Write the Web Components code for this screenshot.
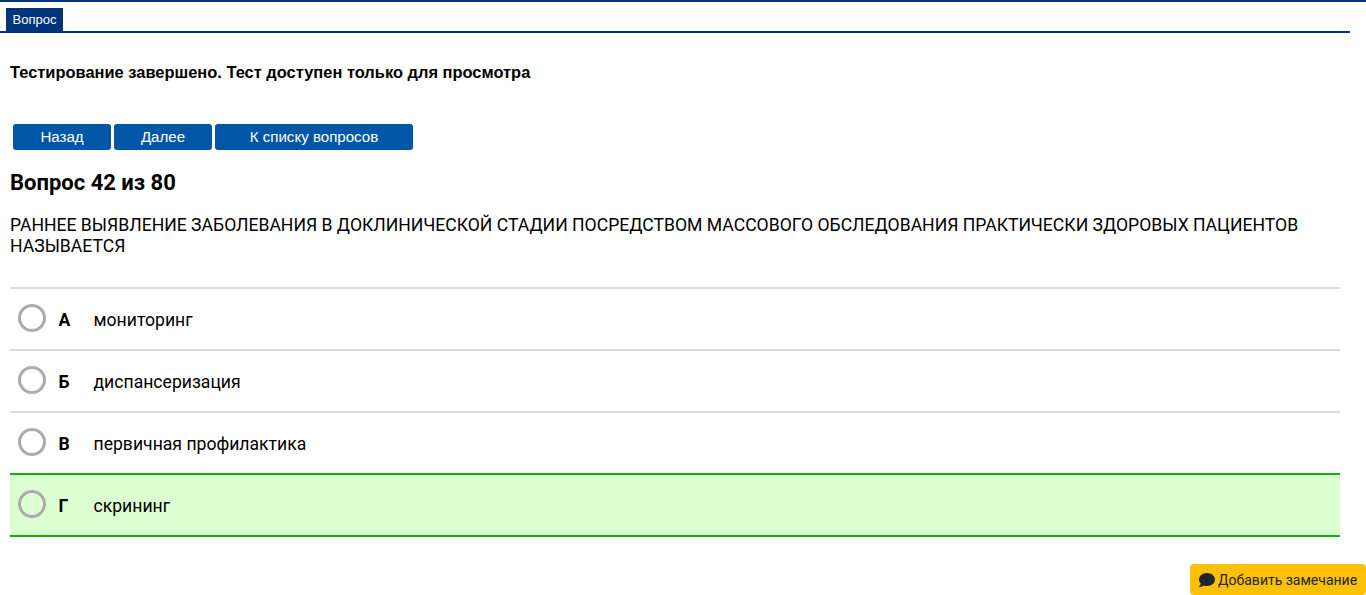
<!DOCTYPE html>
<html lang="ru">
<head>
<meta charset="utf-8">
<title>Вопрос</title>
<style>
html, body { margin: 0; padding: 0; background: #fff; height: 100%; overflow: hidden; }
body { font-family: Roboto, sans-serif; color: #000; }
</style>
</head>
<body>
<test-page>
  <tab-bar>Вопрос</tab-bar>
  <test-notice>Тестирование завершено. Тест доступен только для просмотра</test-notice>
  <nav-buttons>
    <nav-button style="width:98px">Назад</nav-button>
    <nav-button style="width:98px">Далее</nav-button>
    <nav-button style="width:198px">К списку вопросов</nav-button>
  </nav-buttons>
  <question-text number="42" total="80">РАННЕЕ ВЫЯВЛЕНИЕ ЗАБОЛЕВАНИЯ В ДОКЛИНИЧЕСКОЙ СТАДИИ ПОСРЕДСТВОМ МАССОВОГО ОБСЛЕДОВАНИЯ ПРАКТИЧЕСКИ ЗДОРОВЫХ ПАЦИЕНТОВ НАЗЫВАЕТСЯ</question-text>
  <answer-list>
    <answer-row letter="А">мониторинг</answer-row>
    <answer-row letter="Б">диспансеризация</answer-row>
    <answer-row letter="В">первичная профилактика</answer-row>
    <answer-row letter="Г" correct>скрининг</answer-row>
  </answer-list>
</test-page>
<remark-button>Добавить замечание</remark-button>

<script>
function shadow(el, html) {
  el.attachShadow({ mode: 'open' }).innerHTML = html;
}

class TestPage extends HTMLElement {
  connectedCallback() {
    shadow(this, `<style>
      :host { display: block; border-top: 2px solid #003478; }
    </style><slot></slot>`);
  }
}

class TabBar extends HTMLElement {
  connectedCallback() {
    shadow(this, `<style>
      :host { display: flex; box-sizing: border-box; width: 1350px; height: 31px; padding-top: 6px;
        border-bottom: 2px solid #003478; }
      .tab { margin-left: 6px; width: 57px; height: 23px; background: #003478; color: #fff;
        font: 13px/23px "Liberation Sans", sans-serif; text-align: center; }
    </style><div class="tab"><slot></slot></div>`);
  }
}

class TestNotice extends HTMLElement {
  connectedCallback() {
    shadow(this, `<style>
      :host { display: block; margin: 30px 0 0 10px; height: 19px;
        font: bold 16.45px/18px "Liberation Sans", sans-serif; }
    </style><slot></slot>`);
  }
}

class NavButtons extends HTMLElement {
  connectedCallback() {
    shadow(this, `<style>
      :host { display: flex; gap: 3px; margin: 42px 0 0 13px; }
    </style><slot></slot>`);
  }
}

class NavButton extends HTMLElement {
  connectedCallback() {
    shadow(this, `<style>
      :host { display: block; height: 26px; background: #0056a6; color: #fff; border-radius: 3px;
        font: 15.1px/26px "Liberation Sans", sans-serif; text-align: center; }
    </style><slot></slot>`);
  }
}

class QuestionText extends HTMLElement {
  connectedCallback() {
    shadow(this, `<style>
      :host { display: block; margin: 21px 26px 0 10px; }
      h2 { margin: 0; font: 700 22px/24px Roboto, sans-serif; }
      p { margin: 20px 0 0; font: 400 17.6px/21px Roboto, sans-serif; }
    </style>
    <h2>Вопрос ${this.getAttribute('number')} из ${this.getAttribute('total')}</h2>
    <p><slot></slot></p>`);
  }
}

class AnswerList extends HTMLElement {
  connectedCallback() {
    shadow(this, `<style>
      :host { display: block; width: 1330px; margin: 30px 0 0 10px; }
    </style><slot></slot>`);
  }
}

class AnswerRow extends HTMLElement {
  connectedCallback() {
    shadow(this, `<style>
      :host { display: flex; align-items: center; box-sizing: border-box; height: 62px; padding-top: 2px;
        border-top: 2px solid #dcdcdc; font: 400 17.6px/20px Roboto, sans-serif; }
      :host([correct]) { height: 64px; background: #dbffd1; border-top-color: #0eb10e;
        border-bottom: 2px solid #0eb10e; }
      .radio { box-sizing: border-box; width: 28px; height: 28px; margin: -2px 0 2px 7.5px;
        border: 3px solid #acacac; border-radius: 50%; }
      .letter { width: 35px; margin-left: 13px; font-weight: 700; }
    </style>
    <span class="radio"></span>
    <span class="letter">${this.getAttribute('letter')}</span>
    <slot></slot>`);
  }
}

class RemarkButton extends HTMLElement {
  connectedCallback() {
    shadow(this, `<style>
      :host { position: fixed; right: 0; bottom: 0; display: flex; align-items: center; gap: 3px;
        box-sizing: border-box; width: 176px; height: 31px; padding-left: 9px;
        background: #ffc107; color: #212529; border-radius: 4px;
        font: 400 14px/20px Roboto, sans-serif; }
      svg { width: 16px; height: 14px; display: block; }
    </style>
    <svg viewBox="0 0 512 448" aria-hidden="true"><path fill="currentColor" d="M256 0C114.6 0 0 93.1 0 208c0 49.6 21.4 95 57 130.7C44.5 389.1 2.7 434 2.2 434.5c-2.2 2.3-2.8 5.7-1.5 8.7S4.8 448 8 448c66.3 0 116-31.8 140.6-51.4C181.3 408.9 217.6 416 256 416c141.4 0 256-93.1 256-208S397.4 0 256 0z"/></svg>
    <slot></slot>`);
  }
}

customElements.define('test-page', TestPage);
customElements.define('tab-bar', TabBar);
customElements.define('test-notice', TestNotice);
customElements.define('nav-buttons', NavButtons);
customElements.define('nav-button', NavButton);
customElements.define('question-text', QuestionText);
customElements.define('answer-list', AnswerList);
customElements.define('answer-row', AnswerRow);
customElements.define('remark-button', RemarkButton);
</script>
</body>
</html>
